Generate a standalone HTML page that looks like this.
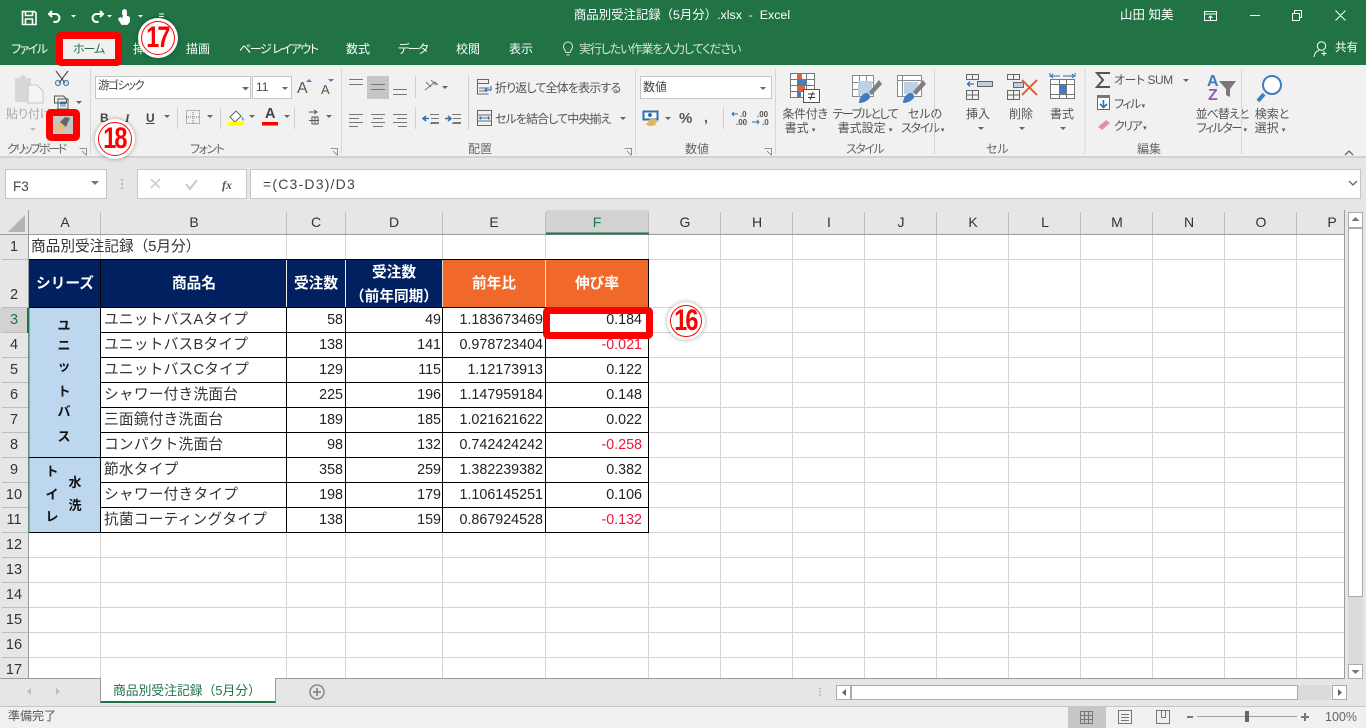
<!DOCTYPE html>
<html lang="ja"><head><meta charset="utf-8"><title>商品別受注記録（5月分）.xlsx - Excel</title>
<style>
html,body{margin:0;padding:0}
body{width:1366px;height:728px;overflow:hidden;position:relative;background:#e6e6e6;font-family:"Liberation Sans","Noto Sans CJK JP",sans-serif;font-size:12px;color:#444;text-spacing-trim:space-all}
div{box-sizing:border-box}
.a{position:absolute}
.t{position:absolute;white-space:nowrap;line-height:1}
.c{transform:translateX(-50%)}
.w{color:#fff}
.p{font-feature-settings:"palt"}
.l{color:#555;font-size:12px;font-feature-settings:"palt"}
.g{color:#666;font-size:12px;font-feature-settings:"palt"}
.h{color:#333;font-size:14px}
.rh{color:#333;font-size:14.5px}
.x{color:#333;font-size:14.67px;letter-spacing:.25px}
.n{color:#222;font-size:14.3px;text-align:right}
.r{color:#f0143c}
.b{font-weight:bold;color:#fff;font-size:14.67px}
.v{font-weight:bold;color:#111;font-size:13px}
.bd{position:absolute;background:#fff;border-radius:50%;box-shadow:0 0 5px rgba(0,0,0,.35)}
.bd div{position:absolute;left:3px;top:3px;right:3px;bottom:3px;border:1.5px solid #f00;border-radius:50%;color:#f00;font-weight:bold;font-size:24px;letter-spacing:-2px;text-align:center}
.bd span{display:inline-block;transform:scale(.98,1.25);text-indent:-2px}
svg{position:absolute;left:0;top:0}
</style></head><body>
<div class="a" style="left:0;top:0;width:1366px;height:65px;background:#217346"></div>
<div class="a" style="left:0;top:65px;width:1366px;height:93px;background:#f1f1f1;border-bottom:2px solid #d2d2d2"></div>
<div class="a" style="left:56px;top:32px;width:66px;height:34px;background:#f1f1f1;border:7px solid #f00;border-radius:5px"></div>

<div class="t w c" style="left:682px;top:9px;font-size:12.4px">商品別受注記録（5月分）.xlsx&nbsp; -&nbsp; Excel</div>
<div class="t w" style="left:1120px;top:9px;font-size:12.5px">山田 知美</div>
<div class="t w p" style="left:11px;top:43px;letter-spacing:-1.5px">ファイル</div>
<div class="t p" style="left:73px;top:43px;color:#217346;letter-spacing:-1px">ホーム</div>
<div class="t w" style="left:133px;top:43px">挿</div>
<div class="t w" style="left:186px;top:43px">描画</div>
<div class="t w p" style="left:239px;top:43px;letter-spacing:-1.4px">ページ レイアウト</div>
<div class="t w" style="left:346px;top:43px">数式</div>
<div class="t w p" style="left:398px;top:43px;letter-spacing:-1.5px">データ</div>
<div class="t w" style="left:456px;top:43px">校閲</div>
<div class="t w" style="left:509px;top:43px">表示</div>
<div class="t p" style="left:579px;top:43px;color:#d5e6dc;letter-spacing:-1.1px">実行したい作業を入力してください</div>
<div class="t w" style="left:1335px;top:43px;font-size:11.5px">共有</div>

<!-- Ribbon controls -->
<div class="a" style="left:95px;top:76px;width:156px;height:23px;background:#fff;border:1px solid #c6c6c6"></div>
<div class="a" style="left:252px;top:76px;width:40px;height:23px;background:#fff;border:1px solid #c6c6c6"></div>
<div class="a" style="left:640px;top:76px;width:132px;height:23px;background:#fff;border:1px solid #c6c6c6"></div>
<div class="a" style="left:367px;top:76px;width:22px;height:23px;background:#c6c6c6"></div>
<div class="t p" style="left:98px;top:81px;font-size:11.5px;color:#444;letter-spacing:-1.4px">游ゴシック</div>
<div class="t" style="left:256px;top:81px;font-size:12px;color:#444">11</div>
<div class="t" style="left:643px;top:81px;font-size:12px;color:#444">数値</div>
<div class="t p" style="left:6px;top:108px;color:#aaa">貼り付け</div>
<div class="t g" style="left:7px;top:143px;letter-spacing:-2.3px">クリップボード</div>
<div class="t g" style="left:190px;top:143px;letter-spacing:-1.5px">フォント</div>
<div class="t g" style="left:468px;top:143px">配置</div>
<div class="t g" style="left:685px;top:143px">数値</div>
<div class="t g" style="left:846px;top:143px;letter-spacing:-1.5px">スタイル</div>
<div class="t g" style="left:986px;top:143px">セル</div>
<div class="t g" style="left:1137px;top:143px">編集</div>
<div class="t" style="left:100px;top:112px;font-size:12px;font-weight:bold;color:#444">B</div>
<div class="t" style="left:125px;top:112px;font-size:12px;font-weight:bold;font-style:italic;font-family:'Liberation Serif',serif;color:#444">I</div>
<div class="t" style="left:146px;top:112px;font-size:12px;font-weight:bold;color:#444;text-decoration:underline">U</div>
<div class="t" style="left:297px;top:81px;font-size:16px;color:#555">A</div>
<div class="t" style="left:321px;top:83px;font-size:13px;color:#555">A</div>
<div class="t" style="left:265px;top:107px;font-size:14.5px;color:#444;font-weight:bold">A</div>
<div class="t l" style="left:495px;top:82px;letter-spacing:-.85px">折り返して全体を表示する</div>
<div class="t l" style="left:495px;top:113px;letter-spacing:-.9px">セルを結合して中央揃え</div>
<div class="t" style="left:679px;top:111px;font-size:15px;color:#555;font-weight:bold">%</div>
<div class="t" style="left:704px;top:110px;font-size:14px;color:#555;font-weight:bold">,</div>
<div class="t" style="left:736px;top:111px;font-size:8px;color:#555;font-weight:bold;letter-spacing:-.2px">&nbsp;&nbsp;.0</div>
<div class="t" style="left:736px;top:119px;font-size:8px;color:#555;font-weight:bold">.00</div>
<div class="t" style="left:757px;top:111px;font-size:8px;color:#555;font-weight:bold">.00</div>
<div class="t" style="left:762px;top:119px;font-size:8px;color:#555;font-weight:bold">.0</div>
<div class="t l c" style="left:805px;top:108px;letter-spacing:-.3px">条件付き</div>
<div class="t l c" style="left:800px;top:122px">書式 <span style="font-size:7px">▾</span></div>
<div class="t l c" style="left:865px;top:108px;letter-spacing:-1.5px">テーブルとして</div>
<div class="t l c" style="left:865px;top:122px">書式設定 <span style="font-size:7px">▾</span></div>
<div class="t l c" style="left:925px;top:108px">セルの</div>
<div class="t l c" style="left:922px;top:122px;letter-spacing:-1.3px">スタイル <span style="font-size:7px">▾</span></div>
<div class="t l c" style="left:978px;top:108px">挿入</div>
<div class="t l c" style="left:1021px;top:108px">削除</div>
<div class="t l c" style="left:1062px;top:108px">書式</div>
<div class="t l" style="left:1114px;top:74px;letter-spacing:-.5px">オート SUM</div>
<div class="t l" style="left:1114px;top:98px;letter-spacing:-1.5px">フィル <span style="font-size:7px">▾</span></div>
<div class="t l" style="left:1114px;top:120px;letter-spacing:-1.5px">クリア <span style="font-size:7px">▾</span></div>
<div class="t l c" style="left:1222px;top:108px;letter-spacing:-1px">並べ替えと</div>
<div class="t l c" style="left:1221px;top:122px;letter-spacing:-1.5px">フィルター <span style="font-size:7px">▾</span></div>
<div class="t l c" style="left:1272px;top:108px">検索と</div>
<div class="t l c" style="left:1270px;top:122px">選択 <span style="font-size:7px">▾</span></div>
<div class="t" style="left:1207px;top:74px;font-size:16px;font-weight:bold;color:#3f7cc0">A</div>
<div class="t" style="left:1208px;top:88px;font-size:16px;font-weight:bold;color:#8e5bb5">Z</div>

<svg width="1366" height="728" viewBox="0 0 1366 728" fill="none">
<!-- QAT -->
<g stroke="#fff" stroke-width="1.600">
<path d="M22.500 11.500h12l1.500 1.500v11.500h-13.500z"/><path d="M25.500 11.500v4h7v-4M25.500 24v-5h7v5"/>
<path d="M52 11l-3 3 3 3M49.500 14h6a4 4 0 1 1-2 7.500" stroke-width="2"/>
<path d="M100 11l3 3-3 3M102.500 14h-6a4 4 0 1 0 2 7.500" stroke-width="2"/>
<path d="M123 15v-3.500a1.500 1.500 0 0 1 3 0v5l3 1v4l-2 2.500h-5l-3-5 1.500-1 1.500 1.500" stroke-width="1.800" fill="#fff"/>
<path d="M1204.500 11.500h12v9h-12zM1204.500 14h12M1210.500 20v-4M1208.500 18l2-2 2 2M1250 15.500h10" stroke-width="1"/>
<path d="M1292.500 13.500h7v7h-7zM1294.500 13v-2.500h7v7h-2M1335.500 10.500l10 10M1345.500 10.500l-10 10" stroke-width="1"/>
<path d="M570 52.500h-4c0-1.500-2.500-3-2.500-6a4.500 4.500 0 0 1 9 0c0 3-2.500 4.500-2.500 6zM566.500 55h3" stroke="#d5e6dc" stroke-width="1"/>
<circle cx="1321.500" cy="46" r="4.200" stroke-width="1"/><path d="M1314 57c.5-4 2.500-6 5-6.500M1324 51v5M1321.500 53.500h5" stroke-width="1"/>
</g>
<g fill="#fff"><path d="M71 15h5l-2.500 2.500zM107 15h5l-2.500 2.500zM138 15h5l-2.500 2.500zM159 16h5v1h-5zM159 13.500h5v1h-5z"/></g>
<!-- clipboard icon -->
<path d="M15 78h5a3 3 0 0 1 6 0h5v24H15z" fill="#d8d8d8"/><path d="M28 85h9l6 6v12H28z" fill="#f4f4f4" stroke="#c8c8c8"/>
<path d="M56 71l9 12M68 71l-9 12" stroke="#555" stroke-width="1.200"/><circle cx="58" cy="83" r="2.500" stroke="#4a7ebb" stroke-width="1.200"/><circle cx="66" cy="83" r="2.500" stroke="#4a7ebb" stroke-width="1.200"/>
<path d="M54.500 96h9l3 3v4h-12zM58 99h10v10H58z" stroke="#555" fill="#f1f1f1"/><path d="M60 102h6M60 104h6M60 106h6" stroke="#4a7ebb"/>
<path d="M76 101h6l-3 3z" fill="#666"/>
<path d="M30 128h6l-3 3z" fill="#bbb"/>
<!-- seps -->
<path d="M90.500 69v85M341.500 69v85M635.500 69v85M775.500 69v85M934.500 69v85M1085 69v85M1241.500 69v85" stroke="#d6d6d6"/>
<path d="M177.500 108v21M220.500 108v21M294.500 108v21M415.500 76v22M415.500 107v22M468.500 75v55M723.500 107v22" stroke="#d0d0d0"/>
<!-- small launchers -->
<path d="M79.500 148.500h7v7M82 151l4 4" stroke="#777" stroke-width=".8"/>
<path d="M330.500 148.500h7v7M333 151l4 4" stroke="#777" stroke-width=".8"/><path d="M624.500 148.500h7v7M627 151l4 4" stroke="#777" stroke-width=".8"/><path d="M764.500 148.500h7v7M767 151l4 4" stroke="#777" stroke-width=".8"/>
<!-- carets -->
<g fill="#666"><path d="M242 87h7l-3.500 3.500zM282 87h6l-3 3zM164 115h6l-3 3zM207 115h6l-3 3zM249 115h6l-3 3zM284 115h6l-3 3zM326 115h6l-3 3zM442 86h6l-3 3zM620 117h6l-3 3zM760 87h6l-3 3zM665 117h6l-3 3z"/>
<path d="M978 127h6l-3 3zM1019 127h6l-3 3zM1060 127h6l-3 3zM1183 79h6l-3 3z"/></g>
<!-- border & fill & color -->
<path d="M186.500 110.500h13v13h-13z" stroke="#777" stroke-dasharray="1 1"/><path d="M186 117h14M193 110v14" stroke="#777" stroke-dasharray="1 1"/>
<path d="M236 111l-6 6 5 5 6-6z" stroke="#666" fill="#fff"/><path d="M241 116l3 3-1 2z" fill="#4a7ebb"/><rect x="228" y="122" width="16" height="3.500" fill="#ffff00"/>
<rect x="262" y="122" width="16" height="3.500" fill="#f00"/>
<path d="M309 112h8M314 110l3 2-3 2M312 117h6v7h-6zM309 120.500h10M315 117v7" stroke="#555"/>
<!-- A arrows -->
<path d="M306 82l3-3 3 3z" fill="#4a7ebb"/><path d="M328 79h6l-3 3z" fill="#4a7ebb"/>
<!-- align -->
<g stroke="#777" stroke-width="1.100">
<path d="M349 79.500h14M349 84.500h14M371 84.500h14M371 89.500h14M393 89.500h14M393 94.500h14"/>
<path d="M349 114.500h14M349 118.500h10M349 122.500h14M349 126.500h9M371 114.500h14M373 118.500h10M371 122.500h14M373 126.500h10M393 114.500h14M397 118.500h10M393 122.500h14M398 126.500h9"/>
<path d="M430 114.500h9M431 118.500h8M431 122.500h8M430 123.500h9M452 114.500h9M453 118.500h8M453 122.500h8M452 123.500h9"/>
<path d="M426 82l5 5M431 80l5 5M425 90l10-8 3 3" />
</g>
<path d="M423 118.500h6M426 116l-3 2.500 3 2.500M445 118.500h6M448 116l3 2.500-3 2.500" stroke="#2f6fb5" stroke-width="1.500"/>
<!-- wrap/merge -->
<path d="M477.500 79.500h11v4h-11zM477.500 84v10h11M479 88h10M479 91h6" stroke="#666"/><path d="M491 86v4h-6M487 88l-2 2 2 2" stroke="#2f6fb5" stroke-width="1.200"/>
<path d="M477.500 110.500h14v15h-14zM477.500 115h14M477.500 121h14" stroke="#666"/><path d="M480 118h9M481 116.500l-1.500 1.500 1.500 1.500M488 116.500l1.500 1.500-1.500 1.500" stroke="#2f6fb5"/>
<!-- currency -->
<rect x="643.500" y="111.500" width="14" height="8" fill="#fff" stroke="#2f6fb5" stroke-width="2"/><circle cx="650" cy="115" r="2" fill="#2f6fb5"/><ellipse cx="653" cy="121" rx="5" ry="2" fill="#e4b65c"/><ellipse cx="651" cy="124" rx="5" ry="2" fill="#e4b65c"/>
<path d="M732 114h6M734 112l-2 2 2 2M752 122h7M757 120l2 2-2 2" stroke="#2f6fb5"/>
<!-- conditional -->
<path d="M790.500 73.500h24v24h-24zM790.500 79.500h24M790.500 85.500h24M790.500 91.500h24M798.500 73.500v24M806.500 73.500v24" stroke="#777" fill="#fff"/>
<rect x="797" y="74" width="5" height="5" fill="#e0633a"/><rect x="797" y="80" width="10" height="5" fill="#4a7ebb"/><rect x="797" y="86" width="8" height="5" fill="#e0633a"/><rect x="797" y="92" width="4" height="5" fill="#4a7ebb"/>
<rect x="803.500" y="89.500" width="16" height="13" fill="#fff" stroke="#555"/><path d="M808 94h7M808 97.500h7M813 92l-3 8" stroke="#333"/>
<!-- table style -->
<path d="M852.500 75.500h21v21h-21zM859.500 75.500v21M866.500 75.500v21M852.500 82.500h21M852.500 89.500h21" stroke="#888" fill="#fff"/>
<rect x="858" y="81" width="14" height="14" fill="#bcd0e8"/>
<path d="M879 80l-10 12 3 3 10-11z" fill="#7f7f7f"/><path d="M859 103c0-5 3-9 7-10 4 0 5 4 3 6-3 3-7 4-10 4z" fill="#3f7cc0"/>
<path d="M911.500 75.500h24v21h-24zM911.500 80.500h24M916.500 75.500v21" stroke="#888" fill="#fff" transform="translate(-14 0)"/><rect x="904" y="82" width="14" height="12" fill="#bcd0e8"/>
<path d="M923 80l-10 12 3 3 10-11z" fill="#7f7f7f"/><path d="M903 103c0-5 3-9 7-10 4 0 5 4 3 6-3 3-7 4-10 4z" fill="#3f7cc0"/>
<!-- insert/delete/format -->
<g stroke="#666">
<path d="M966.500 74.500h12v5h-12zM972.500 74.500v5M966.500 90.500h12v9h-12zM966.500 95h12M972.500 90.500v9"/>
<path d="M1007.500 74.500h12v5h-12zM1013.500 74.500v5M1007.500 90.500h12v9h-12zM1007.500 95h12M1013.500 90.500v9"/><path d="M1013.500 82.500h10v5h-10z" fill="#bcd0e8"/></g>
<rect x="977.500" y="81.500" width="15" height="5" fill="#bcd0e8" stroke="#666"/>
<path d="M974 84h-6M970 81.500l-2.500 2.500 2.500 2.500" stroke="#2f6fb5" stroke-width="1.300"/>
<path d="M1022 80l15 15M1037 80l-15 15" stroke="#e0633a" stroke-width="2"/>
<path d="M1050 73v4M1060 76h-8M1075 73v4M1063 76h10M1053 74l-2 2 2 2M1072 74l2 2-2 2" stroke="#2f6fb5"/>
<path d="M1050.500 79.500h24v19h-24zM1050.500 84.500h24M1059.500 79.500v19M1066.500 79.500v19M1050.500 94.500h24" stroke="#777" fill="#fff"/>
<rect x="1060" y="85" width="6" height="9" fill="#3f7cc0"/>
<!-- editing -->
<path d="M1110 73h-13l6 7-6 7h13" stroke="#555" stroke-width="2"/>
<rect x="1097.500" y="95.500" width="12" height="14" fill="#fff" stroke="#666"/><rect x="1097" y="95" width="13" height="3" fill="#777"/><path d="M1103.500 100v7M1100 104l3.500 3.500 3.500-3.500" stroke="#2f6fb5" stroke-width="1.600"/>
<path d="M1098 127l8-7 4 3-8 7z" fill="#ea8fa0"/>
<path d="M1219 81h17l-6 8v8l-4-2v-6z" fill="#777"/>
<path d="M1264 94l-6 7" stroke="#3f7cc0" stroke-width="4"/><circle cx="1272" cy="85" r="9" stroke="#3f7cc0" stroke-width="2" fill="#fff"/>
<path d="M1345 155l4-4 4 4" stroke="#666" stroke-width="1.300"/>
<path d="M122 179v2M122 183v2M122 187v2" stroke="#aaa" stroke-width="1.500"/>
</svg>

<!-- paintbrush highlight -->
<div class="a" style="left:46px;top:109px;width:34px;height:32px;background:#c6c6c6;border:7px solid #f00;border-radius:5px"></div>
<svg width="1366" height="728" viewBox="0 0 1366 728"><path d="M54 128l6-6 6 6-4 4h-4z" fill="#e8bd7e"/><path d="M60 122l5-5 5 1-4 9z" fill="#666"/></svg>

<!-- formula bar -->
<div class="a" style="left:5px;top:169px;width:102px;height:30px;background:#fff;border:1px solid #c6c6c6"></div>
<div class="a" style="left:137px;top:169px;width:110px;height:30px;background:#fff;border:1px solid #c6c6c6"></div>
<div class="a" style="left:250px;top:169px;width:1111px;height:30px;background:#fff;border:1px solid #c6c6c6"></div>
<div class="t" style="left:13px;top:180px;font-size:13.5px;color:#444">F3</div>
<div class="t" style="left:263px;top:177px;font-size:14px;letter-spacing:1.200px;color:#444">=(C3-D3)/D3</div>
<div class="t" style="left:222px;top:178px;font:italic bold 12px 'Liberation Serif',serif;color:#555">fx</div>
<svg width="1366" height="728" viewBox="0 0 1366 728" fill="none"><path d="M1349 181l4 4 4-4" stroke="#666" stroke-width="1.300"/>
<path d="M91 181h8l-4 4z" fill="#777"/>
<path d="M151 179l9 9M160 179l-9 9" stroke="#c8c8c8" stroke-width="1.500"/><path d="M186 184l4 5 7-9" stroke="#c8c8c8" stroke-width="2"/></svg>

<!-- sheet -->
<div class="a" style="left:29px;top:235px;width:1315px;height:443px;background:#fff"></div>
<svg width="1366" height="728" viewBox="0 0 1366 728" fill="none">
<rect x="546" y="210" width="103" height="24" fill="#d2d2d2"/><rect x="0" y="308" width="28" height="25" fill="#d2d2d2"/>
<g stroke="#d4d4d4">
<path d="M100.500 235v443M286.500 235v443M345.500 235v443M442.500 235v443M545.500 235v443M648.500 235v443M720.500 235v443M792.500 235v443M864.500 235v443M936.500 235v443M1008.500 235v443M1080.500 235v443M1152.500 235v443M1224.500 235v443M1296.500 235v443"/>
<path d="M29 259.500h1315M29 307.500h1315M29 332.500h1315M29 357.500h1315M29 382.500h1315M29 407.500h1315M29 432.500h1315M29 457.500h1315M29 482.500h1315M29 507.500h1315M29 532.500h1315M29 557.500h1315M29 582.500h1315M29 607.500h1315M29 632.500h1315M29 657.500h1315"/>
</g>
<g stroke="#bdbdbd">
<path d="M100.500 212v22M286.500 212v22M345.500 212v22M442.500 212v22M545.500 212v22M648.500 212v22M720.500 212v22M792.500 212v22M864.500 212v22M936.500 212v22M1008.500 212v22M1080.500 212v22M1152.500 212v22M1224.500 212v22M1296.500 212v22"/>
<path d="M2 259.500h26M2 307.500h26M2 332.500h26M2 357.500h26M2 382.500h26M2 407.500h26M2 432.500h26M2 457.500h26M2 482.500h26M2 507.500h26M2 532.500h26M2 557.500h26M2 582.500h26M2 607.500h26M2 632.500h26M2 657.500h26"/>
</g>
<path d="M0 234.500h1345M28.500 210v468M1344.500 210v469M0 678.500h1345" stroke="#9c9c9c"/>
<path d="M546 233.500h103" stroke="#217346" stroke-width="2"/><path d="M28 308v25" stroke="#217346" stroke-width="2"/>
<path d="M25 215v17H8z" fill="#b4b4b4"/>
<!-- fills -->
<rect x="29" y="260" width="258" height="48" fill="#00205f"/>
<rect x="287" y="260" width="59" height="48" fill="#00205f"/>
<rect x="346" y="260" width="97" height="48" fill="#00205f"/>
<rect x="443" y="260" width="206" height="48" fill="#f0692a"/>
<rect x="29" y="308" width="72" height="225" fill="#bdd7ee"/>
<rect x="101" y="308" width="548" height="225" fill="#fff"/>
<!-- table borders -->
<g stroke="#000">
<path d="M29 259.500h620M29 307.500h620M29 457.500h72M29 532.500h620M100.500 260v273M648.500 260v273"/>
<path d="M101 332.500h548M101 357.500h548M101 382.500h548M101 407.500h548M101 432.500h548M101 457.500h548M101 482.500h548M101 507.500h548"/>
<path d="M286.500 308v225M345.500 308v225M442.500 308v225M545.500 308v225"/>
</g>
<path d="M286.500 260v47M345.500 260v47M545.500 260v47" stroke="#e8e8e8"/>
<path d="M442.500 260v47" stroke="#e8d8d0"/>
<path d="M29 308v225" stroke="#217346" stroke-width="1" opacity=".8"/>
</svg>

<!-- column heads -->
<div class="t h c" style="left:65px;top:215px">A</div><div class="t h c" style="left:194px;top:215px">B</div><div class="t h c" style="left:316px;top:215px">C</div><div class="t h c" style="left:394px;top:215px">D</div><div class="t h c" style="left:494px;top:215px">E</div><div class="t h c" style="left:597px;top:215px;color:#217346">F</div><div class="t h c" style="left:685px;top:215px">G</div><div class="t h c" style="left:757px;top:215px">H</div><div class="t h c" style="left:829px;top:215px">I</div><div class="t h c" style="left:901px;top:215px">J</div><div class="t h c" style="left:973px;top:215px">K</div><div class="t h c" style="left:1045px;top:215px">L</div><div class="t h c" style="left:1117px;top:215px">M</div><div class="t h c" style="left:1189px;top:215px">N</div><div class="t h c" style="left:1261px;top:215px">O</div><div class="t h c" style="left:1332px;top:215px">P</div>
<!-- row heads -->
<div class="t rh c" style="left:14px;top:240px">1</div><div class="t rh c" style="left:14px;top:288px">2</div><div class="t rh c" style="left:14px;top:313px;color:#217346">3</div><div class="t rh c" style="left:14px;top:338px">4</div><div class="t rh c" style="left:14px;top:363px">5</div><div class="t rh c" style="left:14px;top:388px">6</div><div class="t rh c" style="left:14px;top:413px">7</div><div class="t rh c" style="left:14px;top:438px">8</div><div class="t rh c" style="left:14px;top:463px">9</div><div class="t rh c" style="left:14px;top:488px">10</div><div class="t rh c" style="left:14px;top:513px">11</div><div class="t rh c" style="left:14px;top:538px">12</div><div class="t rh c" style="left:14px;top:563px">13</div><div class="t rh c" style="left:14px;top:588px">14</div><div class="t rh c" style="left:14px;top:613px">15</div><div class="t rh c" style="left:14px;top:638px">16</div><div class="t rh c" style="left:14px;top:663px">17</div>

<!-- cells -->
<div class="t x" style="left:31px;top:240px;letter-spacing:0">商品別受注記録（5月分）</div>
<div class="t b c" style="left:65px;top:277px">シリーズ</div>
<div class="t b c" style="left:194px;top:277px">商品名</div>
<div class="t b c" style="left:316px;top:277px">受注数</div>
<div class="t b c" style="left:394px;top:266px">受注数</div>
<div class="t b c" style="left:394px;top:290px">（前年同期）</div>
<div class="t b c" style="left:494px;top:277px">前年比</div>
<div class="t b c" style="left:597px;top:277px">伸び率</div>

<div class="t v c" style="left:64px;top:319px">ユ</div><div class="t v c" style="left:64px;top:339px">ニ</div><div class="t v c" style="left:64px;top:360px">ッ</div><div class="t v c" style="left:64px;top:385px">ト</div><div class="t v c" style="left:64px;top:405px">バ</div><div class="t v c" style="left:64px;top:430px">ス</div>
<div class="t v c" style="left:52px;top:465px">ト</div><div class="t v c" style="left:52px;top:488px">イ</div><div class="t v c" style="left:52px;top:510px">レ</div><div class="t v c" style="left:75px;top:476px">水</div><div class="t v c" style="left:75px;top:499px">洗</div>

<div class="t x" style="left:104px;top:313px">ユニットバスAタイプ</div>
<div class="t x" style="left:104px;top:338px">ユニットバスBタイプ</div>
<div class="t x" style="left:104px;top:363px">ユニットバスCタイプ</div>
<div class="t x" style="left:104px;top:388px">シャワー付き洗面台</div>
<div class="t x" style="left:104px;top:413px">三面鏡付き洗面台</div>
<div class="t x" style="left:104px;top:438px">コンパクト洗面台</div>
<div class="t x" style="left:104px;top:463px">節水タイプ</div>
<div class="t x" style="left:104px;top:488px">シャワー付きタイプ</div>
<div class="t x" style="left:104px;top:513px">抗菌コーティングタイプ</div>

<div class="t n" style="right:1023px;top:313px">58</div><div class="t n" style="right:1023px;top:338px">138</div><div class="t n" style="right:1023px;top:363px">129</div><div class="t n" style="right:1023px;top:388px">225</div><div class="t n" style="right:1023px;top:413px">189</div><div class="t n" style="right:1023px;top:438px">98</div><div class="t n" style="right:1023px;top:463px">358</div><div class="t n" style="right:1023px;top:488px">198</div><div class="t n" style="right:1023px;top:513px">138</div>
<div class="t n" style="right:925px;top:313px">49</div><div class="t n" style="right:925px;top:338px">141</div><div class="t n" style="right:925px;top:363px">115</div><div class="t n" style="right:925px;top:388px">196</div><div class="t n" style="right:925px;top:413px">185</div><div class="t n" style="right:925px;top:438px">132</div><div class="t n" style="right:925px;top:463px">259</div><div class="t n" style="right:925px;top:488px">179</div><div class="t n" style="right:925px;top:513px">159</div>
<div class="t n" style="right:823px;top:313px">1.183673469</div><div class="t n" style="right:823px;top:338px">0.978723404</div><div class="t n" style="right:823px;top:363px">1.12173913</div><div class="t n" style="right:823px;top:388px">1.147959184</div><div class="t n" style="right:823px;top:413px">1.021621622</div><div class="t n" style="right:823px;top:438px">0.742424242</div><div class="t n" style="right:823px;top:463px">1.382239382</div><div class="t n" style="right:823px;top:488px">1.106145251</div><div class="t n" style="right:823px;top:513px">0.867924528</div>

<div class="a" style="left:543px;top:307px;width:110px;height:32px;border:7px solid #f00;border-radius:5px;background:#fff"></div>
<div class="t n" style="right:724px;top:313px">0.184</div>
<div class="t n r" style="right:724px;top:338px">-0.021</div><div class="t n" style="right:724px;top:363px">0.122</div><div class="t n" style="right:724px;top:388px">0.148</div><div class="t n" style="right:724px;top:413px">0.022</div><div class="t n r" style="right:724px;top:438px">-0.258</div><div class="t n" style="right:724px;top:463px">0.382</div><div class="t n" style="right:724px;top:488px">0.106</div><div class="t n r" style="right:724px;top:513px">-0.132</div>

<!-- badges -->
<div class="bd" style="left:667px;top:302px;width:38px;height:38px"><div style="line-height:29px"><span>16</span></div></div>
<div class="bd" style="left:138px;top:18px;width:40px;height:40px"><div style="line-height:31px"><span>17</span></div></div>
<div class="bd" style="left:95px;top:119px;width:40px;height:40px"><div style="line-height:31px"><span>18</span></div></div>

<!-- scrollbars / tabs / status -->
<div class="a" style="left:1345px;top:210px;width:21px;height:496px;background:#e6e6e6"></div>
<div class="a" style="left:1348px;top:212px;width:15px;height:466px;background:#dbdbdb"></div>
<div class="a" style="left:1348px;top:212px;width:15px;height:16px;background:#fff;border:1px solid #ababab"></div>
<div class="a" style="left:1348px;top:228px;width:15px;height:369px;background:#fff;border:1px solid #ababab"></div>
<div class="a" style="left:1348px;top:664px;width:15px;height:15px;background:#fff;border:1px solid #ababab"></div>
<div class="a" style="left:0;top:679px;width:1345px;height:27px;background:#e6e6e6"></div>
<div class="a" style="left:100px;top:678px;width:176px;height:25px;background:#fff;border-left:1px solid #9c9c9c;border-right:1px solid #9c9c9c;border-bottom:2px solid #217346"></div>
<div class="t" style="left:113px;top:685px;font-size:12.8px;color:#217346">商品別受注記録（5月分）</div>
<div class="a" style="left:836px;top:685px;width:15px;height:15px;background:#fff;border:1px solid #ababab"></div>
<div class="a" style="left:851px;top:685px;width:447px;height:15px;background:#fff;border:1px solid #ababab"></div>
<div class="a" style="left:1298px;top:685px;width:33px;height:15px;background:#dbdbdb"></div>
<div class="a" style="left:1332px;top:685px;width:15px;height:15px;background:#fff;border:1px solid #ababab"></div>
<div class="a" style="left:0;top:706px;width:1366px;height:22px;background:#f0f0f0;border-top:1px solid #c6c6c6"></div>
<div class="a" style="left:1068px;top:707px;width:38px;height:21px;background:#c6c6c6"></div>
<div class="t" style="left:8px;top:710px;font-size:12px;color:#555">準備完了</div>
<div class="t" style="left:1325px;top:711px;font-size:12.5px;color:#666">100%</div>
<svg width="1366" height="728" viewBox="0 0 1366 728" fill="none">
<path d="M1355.500 217l-4 4h8z" fill="#777"/>
<path d="M1351.500 670h8l-4 4z" fill="#777"/>
<path d="M846 689v7l-4-3.500zM1338 689v7l4-3.500z" fill="#666"/>
<path d="M31 688v7l-4-3.500zM56 688v7l4-3.500z" fill="#bbb"/>
<circle cx="317" cy="692" r="7" stroke="#8a8a8a" stroke-width="1.500"/><path d="M313 692h8M317 688v8" stroke="#8a8a8a" stroke-width="1.800"/>
<path d="M820 688v1.500M820 691v1.500M820 694v1.500" stroke="#aaa" stroke-width="1.500"/>
<path d="M1080.500 711.500h12v12h-12zM1084.500 711.500v12M1088.500 711.500v12M1080.500 715.500h12M1080.500 719.500h12" stroke="#777"/>
<path d="M1118.500 710.500h13v13h-13zM1121 714.500h8M1121 717.500h8M1121 720.500h8" stroke="#777"/>
<path d="M1156.500 710.500h13v13h-13zM1161.500 710.500v7h4v-7" stroke="#777"/>
<path d="M1187 717h6" stroke="#777" stroke-width="2"/><path d="M1197 716.500h100" stroke="#a0a0a0"/><path d="M1301 717h8M1305 713v8" stroke="#777" stroke-width="2"/>
<rect x="1245" y="711" width="4" height="11" fill="#666"/>
</svg>
</body></html>
